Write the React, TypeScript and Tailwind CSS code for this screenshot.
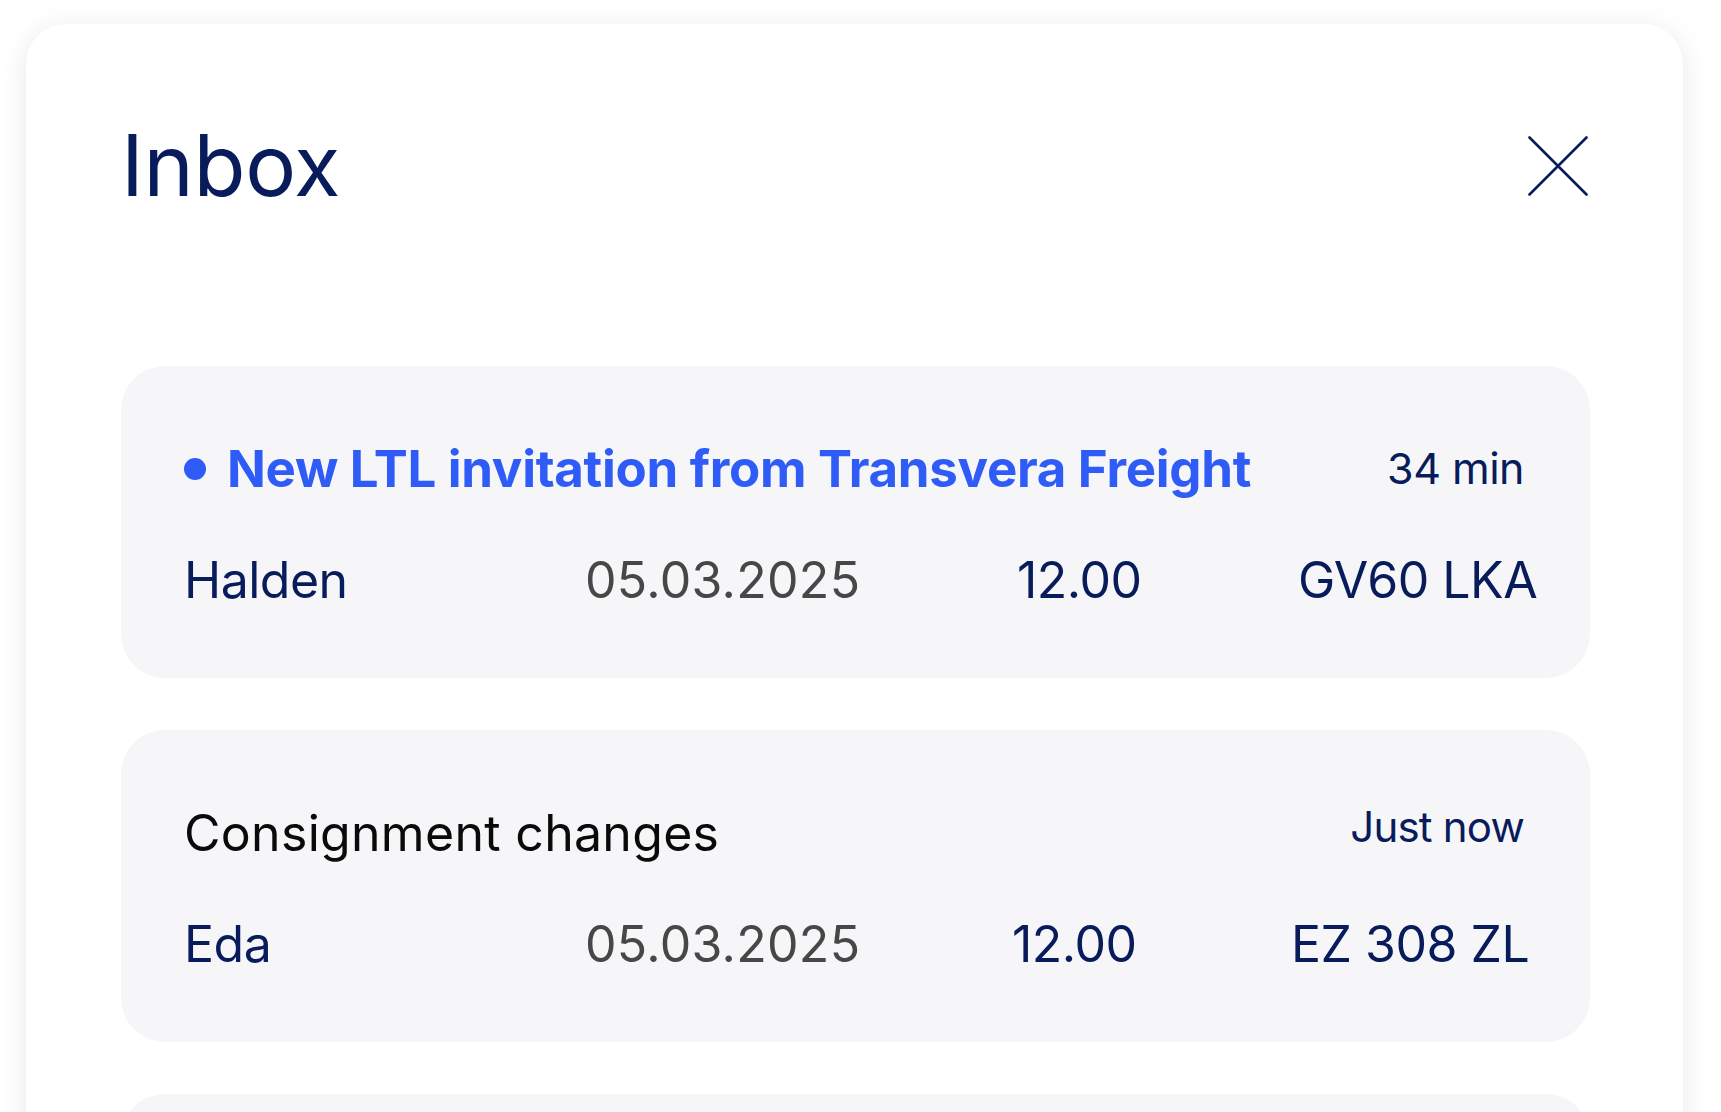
import React from 'react';

type Message = {
  title: string;
  unread?: boolean;
  when: string;
  place: string;
  date: string;
  time: string;
  plate: string;
  cols: string;
};

const messages: Message[] = [
  {
    title: 'New LTL invitation from Transvera Freight',
    unread: true,
    when: '34 min',
    place: 'Halden',
    date: '05.03.2025',
    time: '12.00',
    plate: 'GV60 LKA',
    cols: 'grid-cols-[401px_432px_281px_1fr]',
  },
  {
    title: 'Consignment changes',
    when: 'Just now',
    place: 'Eda',
    date: '05.03.2025',
    time: '12.00',
    plate: 'EZ 308 ZL',
    cols: 'grid-cols-[401px_427px_279px_1fr]',
  },
];

const CloseIcon = () => (
  <svg width="60" height="60" viewBox="0 0 60 60" fill="none" className="text-[#081c5c]">
    <path d="M1.5 1.5 L58.5 58.5 M58.5 1.5 L1.5 58.5" stroke="currentColor" strokeWidth="2.6" strokeLinecap="round" />
  </svg>
);

const MessageCard = ({ m }: { m: Message }) => (
  <div className="rounded-[44px] bg-[#f6f6f8] pl-[63px] pr-[66px] pt-[77px] pb-[73px]">
    <div className="flex items-center justify-between h-[51px]">
      <div className="flex items-center gap-[21px]">
        {m.unread && <span className="w-[22px] h-[22px] rounded-full bg-[#2f5cf6]" />}
        <span
          className={
            m.unread
              ? 'text-[51px] leading-none font-bold text-[#2f5cf6] tracking-[-0.3px]'
              : 'text-[50px] leading-none font-normal text-[#0a0a0a] tracking-[0.3px]'
          }
        >
          {m.title}
        </span>
      </div>
      <span
        className={
          m.unread
            ? 'text-[43px] leading-none text-[#081c5c] tracking-[-0.5px]'
            : 'text-[42px] leading-none text-[#081c5c] tracking-[-0.8px] -mt-[12px]'
        }
      >
        {m.when}
      </span>
    </div>
    <div className={`grid ${m.cols} items-center mt-[61px] text-[50px] leading-none tracking-[-0.5px]`}>
      <span className="text-[#081c5c]">{m.place}</span>
      <span className="text-[#474747] tracking-[0.3px]">{m.date}</span>
      <span className="text-[#081c5c]">{m.time}</span>
      <span className="text-[#081c5c] whitespace-nowrap">{m.plate}</span>
    </div>
  </div>
);

export default function App() {
  return (
    <div className="h-screen overflow-hidden bg-white pt-[24px] pl-[26px] pr-[38px] font-['Inter',sans-serif]">
      <div className="min-h-[1200px] rounded-[40px] bg-white shadow-[0_4px_28px_rgba(0,0,0,0.09)] pt-[99px] pl-[95px] pr-[93px]">
        <div className="flex items-center justify-between">
          <h1 className="text-[85px] leading-none font-normal text-[#081c5c] tracking-[-0.3px]">Inbox</h1>
          <button className="mr-[2px]" aria-label="Close">
            <CloseIcon />
          </button>
        </div>
        <div className="mt-[158px] flex flex-col gap-[52px]">
          {messages.map((m, i) => (
            <MessageCard key={i} m={m} />
          ))}
          <div className="h-[312px] rounded-[44px] bg-[#f6f6f8]" />
        </div>
      </div>
    </div>
  );
}
